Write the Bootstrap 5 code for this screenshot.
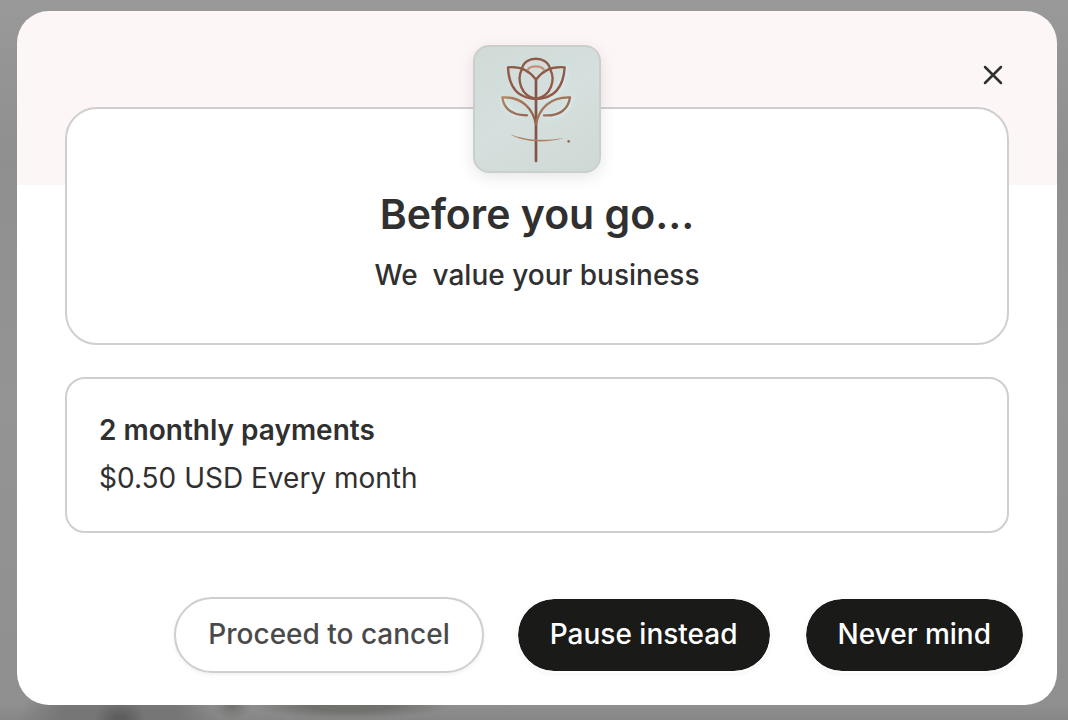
<!DOCTYPE html>
<html lang="en">
<head>
<meta charset="utf-8">
<meta name="viewport" content="width=device-width, initial-scale=1">
<title>Before you go</title>
<link href="https://cdn.jsdelivr.net/npm/bootstrap@5.3.0/dist/css/bootstrap.min.css" rel="stylesheet">
<style>
  body {
    font-family: Inter, "Liberation Sans", sans-serif;
    font-size: 28px;
    line-height: 40px;
    color: #303030;
  }
  .backdrop-area {
    padding: 11px 11px 15px 17px;
    background:
      radial-gradient(26px 20px at 120px 100%, #5e5e5e 20%, transparent),
      radial-gradient(20px 14px at 232px calc(100% - 14px), #72736f, transparent),
      radial-gradient(100px 13px at 350px calc(100% - 14px), #70716d 40%, transparent),
      radial-gradient(100px 60px at 120px 100%, #767676 60%, transparent),
      linear-gradient(to top, #868686, transparent 15px),
      linear-gradient(#999, #8f8f8f 160px, #949494 400px, #8f8f8f);
  }
  .offer-dialog {
    border-radius: 32px;
    background: linear-gradient(#fdf6f6 174px, #fff 174px);
  }
  .dialog-top { height: 96px; padding: 32px 48px 0; }
  .close-btn { width: 32px; height: 32px; color: #303030; }
  .dialog-main { padding: 0 48px; }
  .panel { border: 2px solid #cfcfcf; background: #fff; }
  .panel-hero { border-radius: 32px; padding-bottom: 48px; }
  .panel-plan { border-radius: 20px; padding: 31px 32px 33px; margin-top: 32px; }
  .shop-logo {
    width: 128px; height: 128px; margin-top: -64px;
    border: 2px solid #cbcecd; border-radius: 16px;
    background: linear-gradient(150deg, #d0dbd8, #d5e0de 50%, #ced9d5);
    box-shadow: 0 4px 16px rgba(0, 0, 0, .1);
  }
  .hero-title { font-size: 41px; line-height: 50px; font-weight: 600; }
  .hero-text { white-space: pre; }
  .dialog-actions { gap: 32px; padding: 64px 32px 32px; }
  .pill {
    --bs-btn-font-size: 28px;
    --bs-btn-line-height: 40px;
    --bs-btn-font-weight: 500;
    --bs-btn-border-width: 2px;
    padding: 15px 32px 17px;
    border-radius: 38px;
  }
  .pill-dark {
    --bs-btn-color: #fff; --bs-btn-bg: #1a1a18; --bs-btn-border-color: #fdfdfd;
    --bs-btn-hover-color: #fff; --bs-btn-hover-bg: #303030;
    background-clip: padding-box;
    box-shadow: 0 2px 4px rgba(0, 0, 0, .04);
  }
  .pill-light {
    --bs-btn-color: #4a4a4a; --bs-btn-bg: #fff; --bs-btn-border-color: #cfcfcf;
    --bs-btn-hover-bg: #f6f6f6; --bs-btn-hover-border-color: #bbb;
    box-shadow: 0 2px 4px rgba(0, 0, 0, .06);
  }
</style>
</head>
<body>
<div class="backdrop-area min-vh-100 d-flex flex-column">
  <section class="offer-dialog" role="dialog" aria-modal="true" aria-labelledby="offer-title">
    <header class="dialog-top d-flex justify-content-end align-items-center">
      <button type="button" class="close-btn btn p-0 border-0 d-flex align-items-center justify-content-center" aria-label="Close">
        <svg width="32" height="32" viewBox="0 0 32 32" fill="none" stroke="currentColor" stroke-width="2.5" stroke-linecap="round"><path d="M8 8l16 16M24 8L8 24"/></svg>
      </button>
    </header>
    <main class="dialog-main">
      <div class="panel panel-hero d-flex flex-column align-items-center text-center">
        <div class="shop-logo overflow-hidden">
          <svg class="d-block" width="124" height="124" viewBox="46 36 372 372" fill="none" stroke="#8e5947" stroke-width="7" stroke-linecap="round" stroke-linejoin="round" role="img" aria-label="Rose line drawing">
            <defs>
              <linearGradient id="copper" x1="0" y1="0" x2="1" y2="1"><stop offset="0" stop-color="#b08564"/><stop offset="1" stop-color="#8b5a45"/></linearGradient>
              <filter id="halo" x="-20%" y="-20%" width="140%" height="140%"><feGaussianBlur stdDeviation="7"/></filter>
            </defs>
            <g stroke="#dcebed" stroke-width="12" filter="url(#halo)">
              <path d="M318 98C314 145 293 190 252 192M334 188C325 225 300 245 256 243M172 239C148 230 134 210 130 190"/>
            </g>
            <path d="M229 378V134" stroke="#805448" stroke-width="8"/>
            <path d="M229 134C211 109 183 93 145 97C147 145 166 190 229 192C292 190 312 145 315 97C276 93 247 109 229 134"/>
            <path d="M187 102C193 61 264 61 271 102"/>
            <path d="M187 102C171 133 182 183 229 192C276 183 288 133 271 102"/>
            <path d="M205 103C213 91 244 91 252 103" stroke="#c58f76"/>
            <path d="M229 267C219 220 187 185 128 187C132 221 158 240 202 241" stroke="url(#copper)"/>
            <path d="M229 267C239 220 271 185 331 187C326 223 299 244 253 241" stroke="url(#copper)"/>
            <path d="M151 297C187 313 249 321 313 308C258 327 187 321 151 297Z" fill="#ae7f61" stroke="none"/>
            <circle cx="327" cy="319" r="4" fill="#9a674e" stroke="none"/>
          </svg>
        </div>
        <h1 class="hero-title mt-3 mb-3" id="offer-title">Before you go...</h1>
        <p class="hero-text fw-medium mb-0">We  value your business</p>
      </div>
      <div class="panel panel-plan d-flex flex-column gap-2">
        <div class="fw-semibold">2 monthly payments</div>
        <div>$0.50 USD Every month</div>
      </div>
    </main>
    <footer class="dialog-actions d-flex flex-wrap justify-content-end">
      <button type="button" class="btn pill pill-light">Proceed to cancel</button>
      <button type="button" class="btn pill pill-dark">Pause instead</button>
      <button type="button" class="btn pill pill-dark">Never mind</button>
    </footer>
  </section>
</div>
<script src="https://cdn.jsdelivr.net/npm/bootstrap@5.3.0/dist/js/bootstrap.bundle.min.js"></script>
</body>
</html>
